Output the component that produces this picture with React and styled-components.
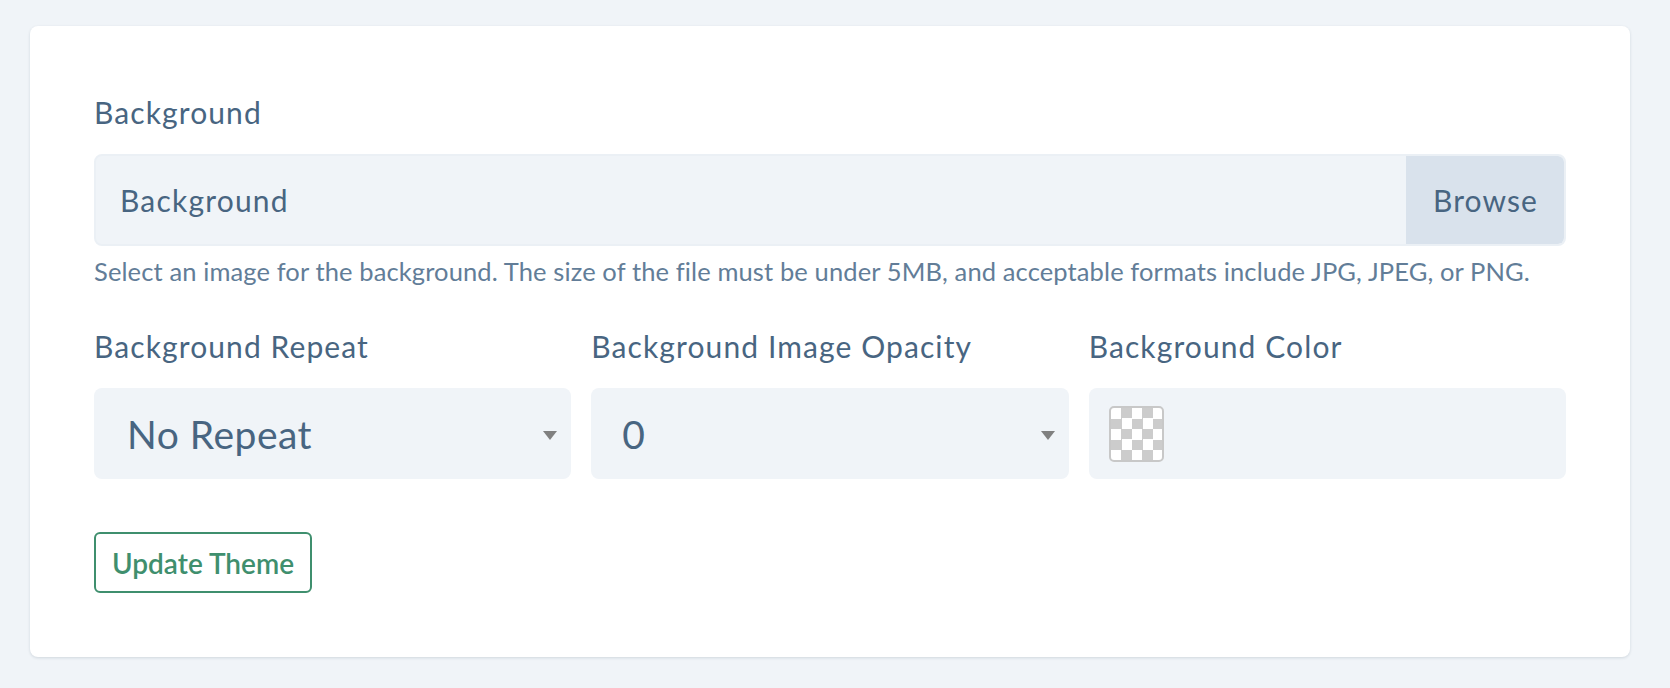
import React from 'react';
import styled, { createGlobalStyle } from 'styled-components';

const GlobalStyle = createGlobalStyle`
  html, body {
    margin: 0;
    padding: 0;
    background: #f0f4f8;
  }
  body {
    font-family: 'Lato', 'Noto Sans', sans-serif;
    color: #486581;
  }
`;

const Page = styled.div`
  padding: 26px 40px 31px 30px;
`;

const Card = styled.div`
  background: #ffffff;
  border-radius: 8px;
  box-shadow: 0 1px 3px rgba(16, 42, 67, 0.14);
  padding: 68px 64px 64px;
`;

const Label = styled.div`
  font-size: 30px;
  line-height: 36px;
  letter-spacing: 1.1px;
  margin-bottom: 24px;
  color: #486581;
`;

const FileInput = styled.div`
  display: flex;
  height: 92px;
  box-sizing: border-box;
  background: #f0f4f8;
  border: 2px solid #ebf0f5;
  border-radius: 8px;
  overflow: hidden;
`;

const FileName = styled.div`
  flex: 1;
  display: flex;
  align-items: center;
  padding-left: 24px;
  font-size: 30px;
  letter-spacing: 1.2px;
  color: #486581;
`;

const BrowseButton = styled.div`
  display: flex;
  align-items: center;
  padding: 0 26px 0 27px;
  background: #d9e2ec;
  font-size: 30px;
  letter-spacing: 1.1px;
  color: #486581;
  border-radius: 0 6px 6px 0;
`;

const Help = styled.p`
  margin: 10px 0 42px;
  font-size: 25.5px;
  line-height: 30px;
  letter-spacing: 0.12px;
  color: #627d98;
`;

const Grid = styled.div`
  display: grid;
  grid-template-columns: repeat(3, 1fr);
  column-gap: 20px;
`;

const Field = styled.div`
  display: flex;
  flex-direction: column;
`;

const SelectBox = styled.div`
  display: flex;
  align-items: center;
  justify-content: space-between;
  height: 91px;
  box-sizing: border-box;
  padding: 0 14px 0 ${p => p.$pad || 33}px;
  background: #f0f4f8;
  border-radius: 8px;
  font-size: 39px;
  letter-spacing: 0.5px;
  color: #486581;
`;

const Caret = styled.span`
  width: 0;
  height: 0;
  border-left: 7.5px solid transparent;
  border-right: 7.5px solid transparent;
  border-top: 9px solid #808080;
  margin-top: 3px;
`;

const ColorBox = styled.div`
  display: flex;
  align-items: center;
  height: 91px;
  box-sizing: border-box;
  padding-left: 20px;
  background: #f0f4f8;
  border-radius: 8px;
`;

const Swatch = styled.div`
  width: 55px;
  height: 56px;
  box-sizing: border-box;
  border: 2px solid #c8c8c8;
  border-radius: 5px;
  background: repeating-conic-gradient(#cccccc 0 25%, #ffffff 0 50%) 0 0 / 21px 21px;
`;

const UpdateButton = styled.button`
  margin-top: 53px;
  height: 61px;
  padding: 0 16px;
  background: #ffffff;
  border: 2px solid #3f8f6e;
  border-radius: 6px;
  font-family: 'Lato', 'Noto Sans', sans-serif;
  font-size: 28px;
  font-weight: 600;
  color: #3f8f6e;
  cursor: pointer;
`;

export default function App() {
  return (
    <>
      <GlobalStyle />
      <Page>
        <Card>
          <Label>Background</Label>
          <FileInput>
            <FileName>Background</FileName>
            <BrowseButton>Browse</BrowseButton>
          </FileInput>
          <Help>
            Select an image for the background. The size of the file must be under 5MB, and acceptable formats include JPG, JPEG, or PNG.
          </Help>
          <Grid>
            <Field>
              <Label>Background Repeat</Label>
              <SelectBox $pad={33}>
                <span>No Repeat</span>
                <Caret />
              </SelectBox>
            </Field>
            <Field>
              <Label>Background Image Opacity</Label>
              <SelectBox $pad={31}>
                <span>0</span>
                <Caret />
              </SelectBox>
            </Field>
            <Field>
              <Label>Background Color</Label>
              <ColorBox>
                <Swatch />
              </ColorBox>
            </Field>
          </Grid>
          <UpdateButton>Update Theme</UpdateButton>
        </Card>
      </Page>
    </>
  );
}
